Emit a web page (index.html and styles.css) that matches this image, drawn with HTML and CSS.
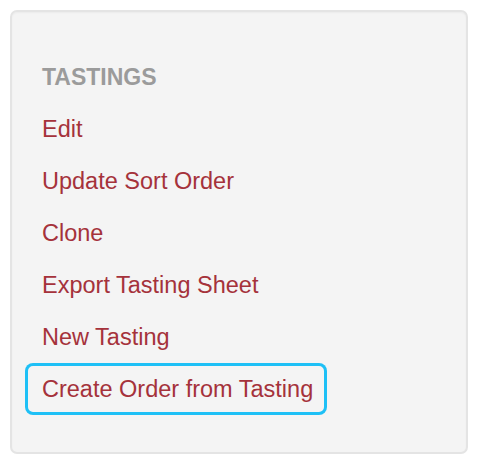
FILE: index.html
```html
<!DOCTYPE html>
<html>
<head>
<meta charset="utf-8">
<link rel="stylesheet" href="styles.css">
</head>
<body>
<div class="well">
  <ul class="nav">
    <li class="nav-header">TASTINGS</li>
    <li><a href="#" class="nav-link">Edit</a></li>
    <li><a href="#" class="nav-link">Update Sort Order</a></li>
    <li><a href="#" class="nav-link">Clone</a></li>
    <li><a href="#" class="nav-link">Export Tasting Sheet</a></li>
    <li><a href="#" class="nav-link">New Tasting</a></li>
    <li><a href="#" class="nav-link is-focused">Create Order from Tasting</a></li>
  </ul>
</div>
</body>
</html>
```

FILE: styles.css
```css
html, body {
  margin: 0;
  padding: 0;
  background: #ffffff;
}
body {
  padding: 10px;
  font-family: "Liberation Sans", Arial, sans-serif;
}
.well {
  box-sizing: border-box;
  width: 458px;
  background: #f4f4f4;
  border: 2px solid #e4e4e4;
  border-radius: 7px;
  box-shadow: inset 0 1px 2px rgba(0,0,0,0.04);
  padding: 39px 0 37px 30px;
}
.nav {
  list-style: none;
  margin: 0;
  padding: 0;
}
.nav li {
  height: 52px;
  line-height: 52px;
}
.nav-header {
  font-size: 23px;
  font-weight: bold;
  color: #9b9b9b;
}
.nav-link {
  display: inline-block;
  box-sizing: border-box;
  height: 52px;
  line-height: 52px;
  margin-left: -17px;
  padding: 0 14px 0 17px;
  font-size: 23.5px;
  color: #a5323b;
  text-decoration: none;
  border-radius: 8px;
}
.is-focused {
  box-shadow: inset 0 0 0 3px #1ec0f6;
}
```
